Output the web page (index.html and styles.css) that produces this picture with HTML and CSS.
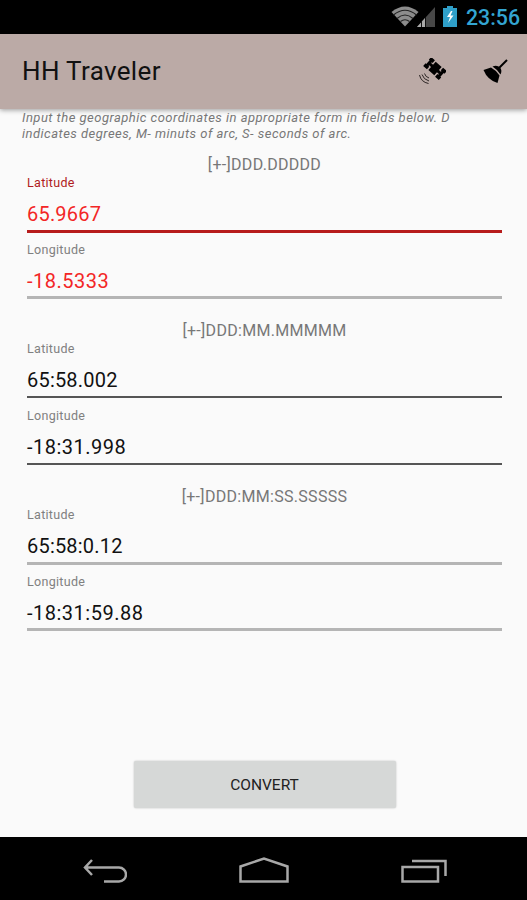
FILE: index.html
```html
<!DOCTYPE html>
<html lang="en">
  <head>
    <meta charset="utf-8">
    <title>HH Traveler</title>
    <link rel="stylesheet" href="styles.css">
  </head>

  <body>

    <div class="status">
      <svg class="wifi" width="28" height="21" viewBox="0 0 28 21">
        <path d="M0.5 6 Q14 -5 27.500 6 L14 20.500 Z" fill="#8c8c8c"/>
        <path d="M2.500 9 Q14 -.5 25.500 9 M6 12.500 Q14 5.500 22 12.500 M9.500 15.500 Q14 12 18.500 15.500" fill="none" stroke="#222" stroke-width="1.200"/>
      </svg>
      <svg class="signal" width="18" height="20" viewBox="0 0 18 20">
        <path d="M0 20 L18 0 V20 Z" fill="#484848"/>
        <path d="M0 20 L8 11 V20 Z" fill="#aaa"/>
        <path d="M4.500 14 V20 M8.500 10 V20" stroke="#111"/>
      </svg>
      <svg class="battery" width="14" height="21" viewBox="0 0 14 21">
        <path d="M0 2 H4 V0 H10 V2 H14 V21 H0 Z" fill="#2f9fc9"/>
        <path d="M8 5 L4 11 H7 L5 17 L10.500 9.500 H7.500 L9.500 5 Z" fill="#fff"/>
      </svg>
      <span class="clock">23:56</span>
    </div>

    <div class="toolbar">
      <h1>HH Traveler</h1>
      <svg class="satellite" width="28" height="28" viewBox="0 0 28 28">
        <g transform="translate(17 10.500) rotate(42)">
          <path d="M-10.500 -6 H-5.500 V-2.500 H-6.500 V-1.500 H-4 V-5.500 H4 V-1.500 H6.500 V-2.500 H5.500 V-6 H10.500 V-2.500 H9.500 V2.500 H10.500 V6 H5.500 V2.500 H6.500 V1.500 H4 V5.500 H-4 V1.500 H-6.500 V2.500 H-5.500 V6 H-10.500 V2.500 H-9.500 V-2.500 H-10.500 Z"/>
        </g>
        <path d="M6.500 15.500 Q7.500 19 11 20 M4 16.500 Q5.500 21.500 11 23 M1.500 17 Q3 24 10.500 25.500" fill="none" stroke="#2b2423"/>
      </svg>
      <svg class="broom" width="26" height="26" viewBox="0 0 26 26">
        <path d="M25 1 L17 9" stroke="#000" stroke-width="2"/>
        <path d="M10.500 7.500 Q15 5.500 18 8.500 Q20.500 11.500 18.500 15.500 Q16 11 10.500 7.500 Z"/>
        <path d="M9 8.500 Q14.500 11.500 17.500 16.500 L15.500 24 Q5.500 21 1.500 11 Z"/>
      </svg>
    </div>

    <div class="content">
      <p class="hint">Input the geographic coordinates in appropriate form in fields below. D<br>indicates degrees, M- minuts of arc, S- seconds of arc.</p>

      <div class="group">
        <div class="format">[+-]DDD.DDDDD</div>
        <div class="field red active">
          <label>Latitude</label>
          <div class="value">65.9667</div>
        </div>
        <div class="field red">
          <label>Longitude</label>
          <div class="value negative">-18.5333</div>
        </div>
      </div>

      <div class="group thin">
        <div class="format">[+-]DDD:MM.MMMMM</div>
        <div class="field">
          <label>Latitude</label>
          <div class="value">65:58.002</div>
        </div>
        <div class="field">
          <label>Longitude</label>
          <div class="value negative">-18:31.998</div>
        </div>
      </div>

      <div class="group">
        <div class="format">[+-]DDD:MM:SS.SSSSS</div>
        <div class="field">
          <label>Latitude</label>
          <div class="value">65:58:0.12</div>
        </div>
        <div class="field">
          <label>Longitude</label>
          <div class="value negative">-18:31:59.88</div>
        </div>
      </div>

      <button class="convert">CONVERT</button>
    </div>

    <div class="nav">
      <svg width="44" height="28" viewBox="0 0 44 28">
        <path d="M9 4 L2 11.500 L9 19 M2 11.500 H36 A7 7 0 0 1 36 25.500 H21" />
      </svg>
      <svg width="50" height="28" viewBox="0 0 50 28">
        <path d="M1.500 25.500 V10.500 L25 2.500 L48.500 10.500 V25.500 Z"/>
      </svg>
      <svg width="46" height="28" viewBox="0 0 46 28">
        <path d="M1.500 11 H37 V25.500 H1.500 Z M11 5 H44.500 V20"/>
      </svg>
    </div>

  </body>
</html>
```
FILE: styles.css
```css
* {
  box-sizing: border-box;
}

body {
  display: flex;
  flex-direction: column;
  height: 900px;
  margin: 0;
  overflow: hidden;
  background-color: #fafafa;
  font-family: Roboto, "Liberation Sans", sans-serif;
  color: #111;
}

.status {
  display: flex;
  justify-content: flex-end;
  height: 34px;
  padding: 6px 7px 0 0;
  background-color: #000;
}

.signal {
  margin: 1px 8px 0 -2px;
}

.clock {
  margin: -1px 0 0 9px;
  font-size: 21.3px;
  font-weight: 500;
  line-height: 25px;
  color: #33a5d2;
}

.toolbar {
  display: flex;
  align-items: center;
  height: 75px;
  flex-shrink: 0;
  padding: 0 19px 0 22px;
  background-color: #bbaaa6;
  box-shadow: 0 1px 5px rgba(0, 0, 0, 0.4);
}

h1 {
  flex: 1;
  margin: 0;
  padding-bottom: 1px;
  font-size: 26px;
  font-weight: 400;
  letter-spacing: 0.35px;
}

.satellite {
  margin-right: 36px;
}

.content {
  display: flex;
  flex-direction: column;
  flex: 1;
  padding: 0 25px 0 27px;
}

.hint {
  margin: 1px 0 14px -5px;
  font-size: 13px;
  font-style: italic;
  line-height: 15.5px;
  letter-spacing: 0.48px;
  white-space: nowrap;
  color: #777;
}

.group {
  height: 166px;
}

.format {
  font-size: 16px;
  line-height: 19px;
  letter-spacing: 0.3px;
  text-align: center;
  color: #777;
}

.field {
  height: 66.5px;
}

label {
  display: block;
  font-size: 12.5px;
  line-height: 17px;
  letter-spacing: 0.3px;
  color: #808080;
}

.value {
  height: 41.5px;
  padding-top: 11px;
  border-bottom: 3px solid #b5b5b5;
  font-size: 20px;
  line-height: 24px;
  letter-spacing: 0.2px;
}

.negative {
  letter-spacing: 0.5px;
}

.thin .value {
  height: 41px;
  border-bottom: 2px solid #555;
}

.red .value {
  color: #f32626;
}

.active label {
  color: #b01c22;
}

.active .value {
  border-color: #b71c1c;
}

.convert {
  width: 262px;
  height: 47px;
  margin: 108px auto 0;
  padding: 1px 6px;
  border: 0;
  border-radius: 2px;
  background-color: #d6d8d7;
  box-shadow: 0 0 2px rgba(0, 0, 0, 0.25);
  font-family: inherit;
  font-size: 15.5px;
  color: #222;
}

.nav {
  display: flex;
  align-items: center;
  justify-content: space-between;
  height: 63px;
  padding: 2px 80px 0 83px;
  background-color: #000;
}

.nav path {
  fill: none;
  stroke: #a8a8a8;
  stroke-width: 2.5;
}
```
